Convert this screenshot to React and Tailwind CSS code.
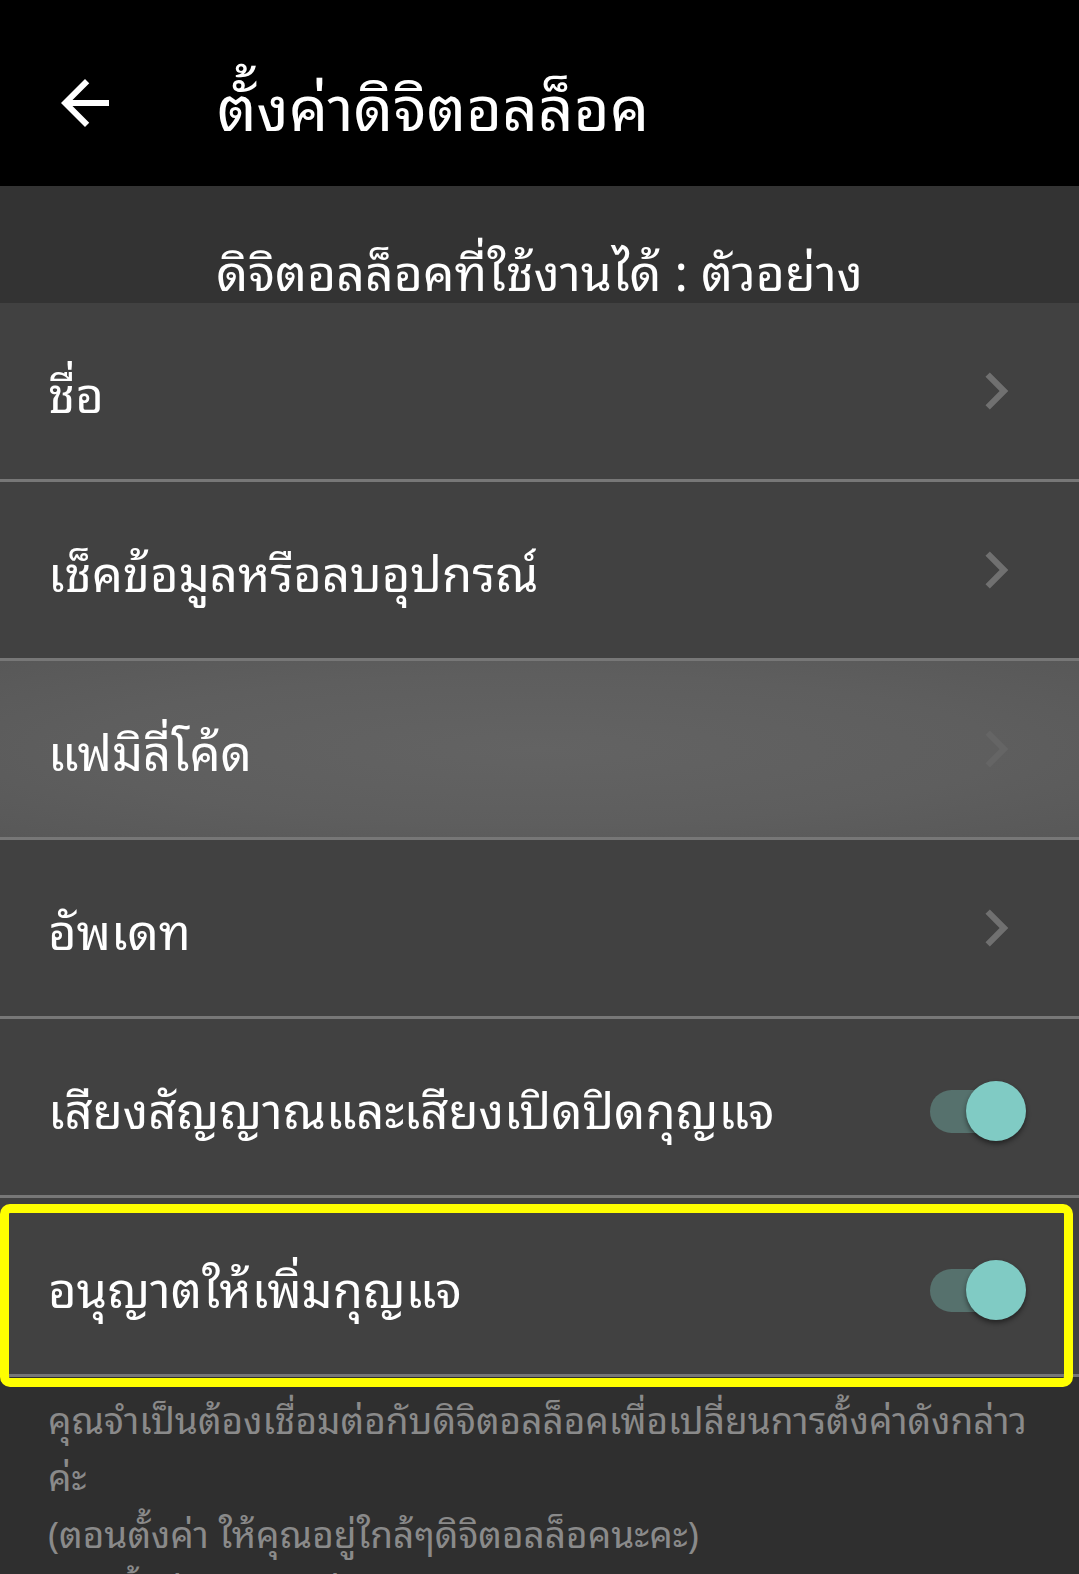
const ROWS = [
    { id: 'name', label: 'ชื่อ', kind: 'link' },
    { id: 'info', label: 'เช็คข้อมูลหรือลบอุปกรณ์', kind: 'link' },
    { id: 'family', label: 'แฟมิลี่โค้ด', kind: 'link', pressed: true },
    { id: 'update', label: 'อัพเดท', kind: 'link' },
    { id: 'sound', label: 'เสียงสัญญาณและเสียงเปิดปิดกุญแจ', kind: 'toggle' },
    { id: 'allow', label: 'อนุญาตให้เพิ่มกุญแจ', kind: 'toggle', highlight: true },
];

function BackArrow() {
    return (
        <svg viewBox="0 0 24 24" className="h-[72px] w-[72px] fill-white">
            <path d="M20 11H7.83l5.59-5.59L12 4l-8 8 8 8 1.41-1.41L7.83 13H20v-2z" />
        </svg>
    );
}

function Chevron({ faint }) {
    return (
        <svg viewBox="0 0 24 24" className={`h-[74px] w-[74px] ${faint ? 'fill-[#656565]' : 'fill-[#707070]'}`}>
            <path d="M10 6L8.59 7.41 13.17 12l-4.58 4.59L10 18l6-6z" />
        </svg>
    );
}

function Toggle() {
    return (
        <div className="relative mt-[8px] h-[60px] w-[96px]">
            <div className="absolute left-0 top-[9px] h-[43px] w-[80px] rounded-full bg-[#56716d]" />
            <div className="absolute left-[36px] top-0 h-[60px] w-[60px] rounded-full bg-[#80cbc4] shadow-[0_3px_5px_rgba(0,0,0,0.45)]" />
        </div>
    );
}

export default function App() {
    return (
        <div className="h-[1574px] w-full overflow-hidden bg-[#2f2f2f] font-['Noto_Sans_Thai_Looped','Noto_Sans',sans-serif] text-white">
            <header className="flex h-[186px] items-center bg-black pt-[20px]">
                <div className="ml-[49px] flex items-center">
                    <BackArrow />
                </div>
                <h1 className="ml-[96px] text-[62px] leading-none text-white">ตั้งค่าดิจิตอลล็อค</h1>
            </header>

            <div className="flex h-[117px] items-end justify-center bg-[#333333] pb-[2px]">
                <span className="text-[50px] leading-[64px] text-white">ดิจิตอลล็อคที่ใช้งานได้ : ตัวอย่าง</span>
            </div>

            <div>
                {ROWS.map(row => (
                    <div
                        key={row.id}
                        className={`relative flex h-[179px] items-center border-b-[3px] border-[#777777] pl-[48px] ${row.pressed ? 'bg-[radial-gradient(ellipse_at_center,#636363_0%,#5e5e5e_60%,#585858_100%)]' : 'bg-[#414141]'}`}
                    >
                        <span className="flex-1 text-[49px] leading-none text-white">{row.label}</span>
                        {row.kind === 'link' ? (
                            <div className="mr-[46px] flex items-center">
                                <Chevron faint={row.pressed} />
                            </div>
                        ) : (
                            <div className="mr-[53px] flex items-center">
                                <Toggle />
                            </div>
                        )}
                        {row.highlight ? (
                            <div className="pointer-events-none absolute left-0 top-[6px] z-10 h-[183px] w-[1073px] rounded-[10px] border-[9px] border-[#ffff00]" />
                        ) : null}
                    </div>
                ))}
            </div>

            <div className="pl-[48px] pr-[48px] pt-[12px] text-[37px] leading-[57px] text-[#8a8a8a]">
                <p>คุณจำเป็นต้องเชื่อมต่อกับดิจิตอลล็อคเพื่อเปลี่ยนการตั้งค่าดังกล่าวค่ะ</p>
                <p>(ตอนตั้งค่า ให้คุณอยู่ใกล้ๆดิจิตอลล็อคนะคะ)</p>
                <p>ขณะตั้งค่า กรุณาอย่าปิดแอปพลิเคชัน</p>
            </div>
        </div>
    );
}
